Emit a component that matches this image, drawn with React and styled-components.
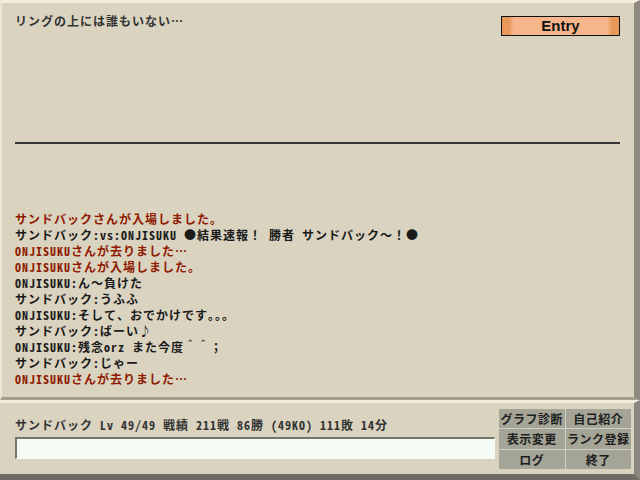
import React from 'react';
import styled, { createGlobalStyle } from 'styled-components';

const GlobalStyle = createGlobalStyle`
    html, body {
        margin:0;
        padding:0;
        background:#d9d3c0;
    }
`;

const FONT = `"Noto Sans Mono CJK JP", "Noto Sans CJK JP", "DejaVu Sans Mono", monospace`;

const log = [
    { red: true, text: 'サンドバックさんが入場しました。' },
    { text: 'サンドバック:vs:ONJISUKU ●結果速報！ 勝者 サンドバック～！●' },
    { red: true, text: 'ONJISUKUさんが去りました…' },
    { red: true, text: 'ONJISUKUさんが入場しました。' },
    { text: 'ONJISUKU:ん～負けた' },
    { text: 'サンドバック:うふふ' },
    { text: 'ONJISUKU:そして、おでかけです。。。' },
    { text: 'サンドバック:ばーい♪' },
    { text: 'ONJISUKU:残念orz また今度＾＾；' },
    { text: 'サンドバック:じゃー' },
    { red: true, text: 'ONJISUKUさんが去りました…' },
];

const menu = ['グラフ診断', '自己紹介', '表示変更', 'ランク登録', 'ログ', '終了'];

const App = () => {
    return (
        <Screen>
            <GlobalStyle />
            <Ring>
                <Header>
                    <Status>リングの上には誰もいない…</Status>
                    <EntryButton>Entry</EntryButton>
                </Header>
                <Rule />
                <Log>
                    {log.map((l, i) => (
                        <Line key={i} $red={l.red}>{l.text}</Line>
                    ))}
                </Log>
            </Ring>
            <Console>
                <InputArea>
                    <Profile>サンドバック Lv 49/49 戦績 211戦 86勝 (49KO) 111敗 14分</Profile>
                    <ChatInput />
                </InputArea>
                <Menu>
                    {menu.map((m) => (
                        <MenuButton key={m}>{m}</MenuButton>
                    ))}
                </Menu>
            </Console>
        </Screen>
    );
};

export default App;

const Screen = styled.div`
    width:640px;
    height:480px;
    display:flex;
    flex-direction:column;
    background:#d9d3c0;
    font-family:${FONT};
    font-weight:700;
    font-size:12px;
    letter-spacing:1px;
    overflow:hidden;
`;

const Ring = styled.div`
    height:400px;
    box-sizing:border-box;
    border-top:3px solid #f6ece0;
    border-left:2px solid #ece4d4;
    border-right:6px solid #8e8a82;
    border-bottom:3px solid #a49e90;
    display:flex;
    flex-direction:column;
    padding:0 12px 0 13px;
`;

const Header = styled.div`
    display:flex;
    justify-content:space-between;
    align-items:flex-start;
    height:139px;
    padding-top:10px;
    padding-right:2px;
    box-sizing:border-box;
`;

const Status = styled.div`
    color:#333;
    line-height:16px;
`;

const EntryButton = styled.div`
    width:117px;
    height:18px;
    margin-top:3px;
    border:1px solid #111;
    background:linear-gradient(90deg, #e8995a 0, #e8995a 7px, #f7b58c 12px, #f7b58c calc(100% - 12px), #e8995a calc(100% - 7px), #e8995a 100%);
    color:#111;
    font-family:"Liberation Sans", Arial, sans-serif;
    font-weight:700;
    font-size:15px;
    letter-spacing:0;
    line-height:18px;
    text-align:center;
`;

const Rule = styled.div`
    height:2px;
    background:#363636;
    margin-right:2px;
`;

const Log = styled.div`
    padding-top:67px;
    display:flex;
    flex-direction:column;
`;

const Line = styled.div`
    line-height:16px;
    height:16px;
    white-space:nowrap;
    color:${(p) => (p.$red ? '#8f1a00' : '#1a1a1a')};
`;

const Console = styled.div`
    flex:1;
    box-sizing:border-box;
    border-top:3px solid #f4ebdd;
    border-right:6px solid #8a8780;
    border-bottom:6px solid #6f6c66;
    display:flex;
    padding:6px 3px 0 15px;
    gap:4px;
`;

const InputArea = styled.div`
    flex:1;
    display:flex;
    flex-direction:column;
`;

const Profile = styled.div`
    color:#333;
    line-height:16px;
    margin-top:8px;
`;

const ChatInput = styled.div`
    margin-top:4px;
    height:19px;
    background:#f4faf4;
    border-top:2px solid #77756b;
    border-left:2px solid #77756b;
    border-right:1px solid #fbf6ee;
    border-bottom:1px solid #fbf6ee;
`;

const Menu = styled.div`
    width:132px;
    height:60px;
    display:grid;
    grid-template-columns:1fr 1fr;
    grid-template-rows:repeat(3, 1fr);
    gap:1px;
    background:#cfcfc4;
`;

const MenuButton = styled.div`
    background:#a4a597;
    color:#1e1e1e;
    display:flex;
    align-items:center;
    justify-content:center;
    font-size:12px;
    letter-spacing:0.5px;
    white-space:nowrap;
`;
